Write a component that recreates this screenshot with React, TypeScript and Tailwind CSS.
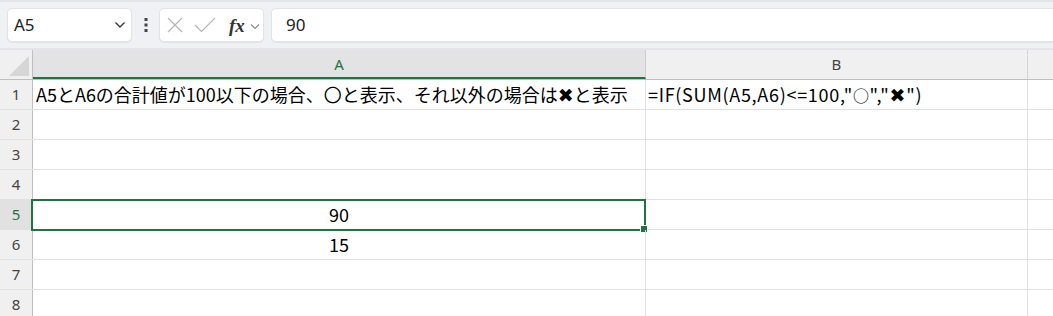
export default function App() {
  const rows = [1, 2, 3, 4, 5, 6, 7, 8];
  const cellFont = { fontFamily: '"Noto Sans CJK JP", "Noto Sans", sans-serif' };
  const heavyX = { fontFamily: '"DejaVu Sans", sans-serif' };

  return (
    <div className="w-[1053px] h-[316px] overflow-hidden bg-white" style={cellFont}>
      {/* toolbar */}
      <div className="h-[50px] bg-[#f0f1f4] border-t-2 border-[#e2e4e8] flex items-start pt-[6px] pl-[7px] gap-0 border-b-2 border-b-[#e4e5e8]">
        <div className="w-[125px] h-[34px] bg-white rounded-[5px] border border-[#e3e4e7] shadow-[0_1px_1px_rgba(0,0,0,0.06)] flex items-center justify-between pl-[6px] pr-[5px]">
          <span className="text-[17px] text-[#222]" style={{ fontFamily: '"Noto Sans", sans-serif' }}>A5</span>
          <svg width="12" height="8" viewBox="0 0 12 8" fill="none">
            <path d="M1.5 1.5 L6 6 L10.5 1.5" stroke="#333" strokeWidth="1.3" />
          </svg>
        </div>
        <div className="w-[27px] h-[34px] flex items-center justify-center">
          <svg width="4" height="14" viewBox="0 0 4 14">
            <rect x="0.5" y="0" width="3" height="3" fill="#444" />
            <rect x="0.5" y="5.5" width="3" height="3" fill="#444" />
            <rect x="0.5" y="11" width="3" height="3" fill="#444" />
          </svg>
        </div>
        <div className="w-[105px] h-[34px] bg-white rounded-[5px] border border-[#e3e4e7] shadow-[0_1px_1px_rgba(0,0,0,0.06)] flex items-center pl-[6px]">
          <svg width="16" height="16" viewBox="0 0 16 16" fill="none" className="ml-[1px]">
            <path d="M1 1 L15 15 M15 1 L1 15" stroke="#b5b5b5" strokeWidth="1.2" />
          </svg>
          <svg width="22" height="16" viewBox="0 0 22 16" fill="none" className="ml-[11px]">
            <path d="M1 8 L7.5 14.5 L21 1" stroke="#b5b5b5" strokeWidth="1.2" />
          </svg>
          <span className="ml-[13px] text-[19px] font-bold italic text-[#333] leading-none" style={{ fontFamily: '"Liberation Serif", serif' }}>fx</span>
          <svg width="10" height="7" viewBox="0 0 10 7" fill="none" className="ml-[5px] mt-[2px]">
            <path d="M1 1.5 L5 5.5 L9 1.5" stroke="#888" strokeWidth="1.1" />
          </svg>
        </div>
        <div className="ml-[7px] flex-1 h-[34px] bg-white rounded-l-[5px] border border-r-0 border-[#e3e4e7] shadow-[0_1px_1px_rgba(0,0,0,0.06)] flex items-center pl-[14px]">
          <span className="text-[17px] text-[#222]" style={{ fontFamily: '"Noto Sans", sans-serif' }}>90</span>
        </div>
      </div>

      {/* column headers */}
      <div className="flex h-[30px] border-b border-[#bfbfbf]" style={{ fontFamily: '"Noto Sans", sans-serif' }}>
        <div className="w-[33px] shrink-0 bg-[#f0f0f0] border-r border-[#bfbfbf] flex items-end justify-end p-[3px]">
          <div className="w-0 h-0 border-l-[20px] border-l-transparent border-b-[20px] border-b-[#d6d6d6]" />
        </div>
        <div className="w-[613px] shrink-0 bg-[#e3e3e3] border-r border-[#cfcfcf] border-b-2 border-b-[#217346] flex items-center justify-center text-[15px] text-[#217346] pt-[2px]">A</div>
        <div className="w-[382px] shrink-0 bg-[#f0f0f0] border-r border-[#d4d4d4] flex items-center justify-center text-[15px] text-[#444]">B</div>
        <div className="flex-1 bg-[#f0f0f0]" />
      </div>

      {/* rows */}
      {rows.map((r) => (
        <div key={r} className="flex h-[30px] border-b border-[#e1e1e1]">
          <div
            className={
              r === 5
                ? 'w-[33px] shrink-0 bg-[#e1e1e1] border-r border-[#bfbfbf] flex items-center justify-center text-[15px] text-[#217346]'
                : 'w-[33px] shrink-0 bg-[#f0f0f0] border-r border-[#bfbfbf] flex items-center justify-center text-[15px] text-[#444]'
            }
            style={{ fontFamily: '"Noto Sans", sans-serif' }}
          >
            {r}
          </div>
          <div className="w-[613px] shrink-0 border-r border-[#e1e1e1] relative flex items-center text-[18px] text-black">
            {r === 1 && (
              <span className="pl-[3px] whitespace-nowrap">
                A5とA6の合計値が100以下の場合、〇と表示、それ以外の場合は
                <span className="text-[19px] leading-none" style={heavyX}>✖</span>
                と表示
              </span>
            )}
            {r === 5 && <span className="w-full text-center">90</span>}
            {r === 6 && <span className="w-full text-center">15</span>}
            {r === 5 && (
              <div className="absolute -left-[2px] -top-[1px] -right-[1px] -bottom-[2px] border-2 border-[#217346]">
                <div className="absolute -right-[4px] -bottom-[4px] w-[6px] h-[6px] bg-[#217346] border border-white box-content" />
              </div>
            )}
          </div>
          <div className="w-[382px] shrink-0 border-r border-[#e1e1e1] flex items-center text-[18px] text-black">
            {r === 1 && (
              <span className="pl-[2px] whitespace-nowrap tracking-[0.7px]">
                =IF(SUM(A5,A6)&lt;=100,"<span className="text-[16px]">○</span>","
                <span className="text-[19px] leading-none" style={heavyX}>✖</span>
                ")
              </span>
            )}
          </div>
          <div className="flex-1" />
        </div>
      ))}
    </div>
  );
}
